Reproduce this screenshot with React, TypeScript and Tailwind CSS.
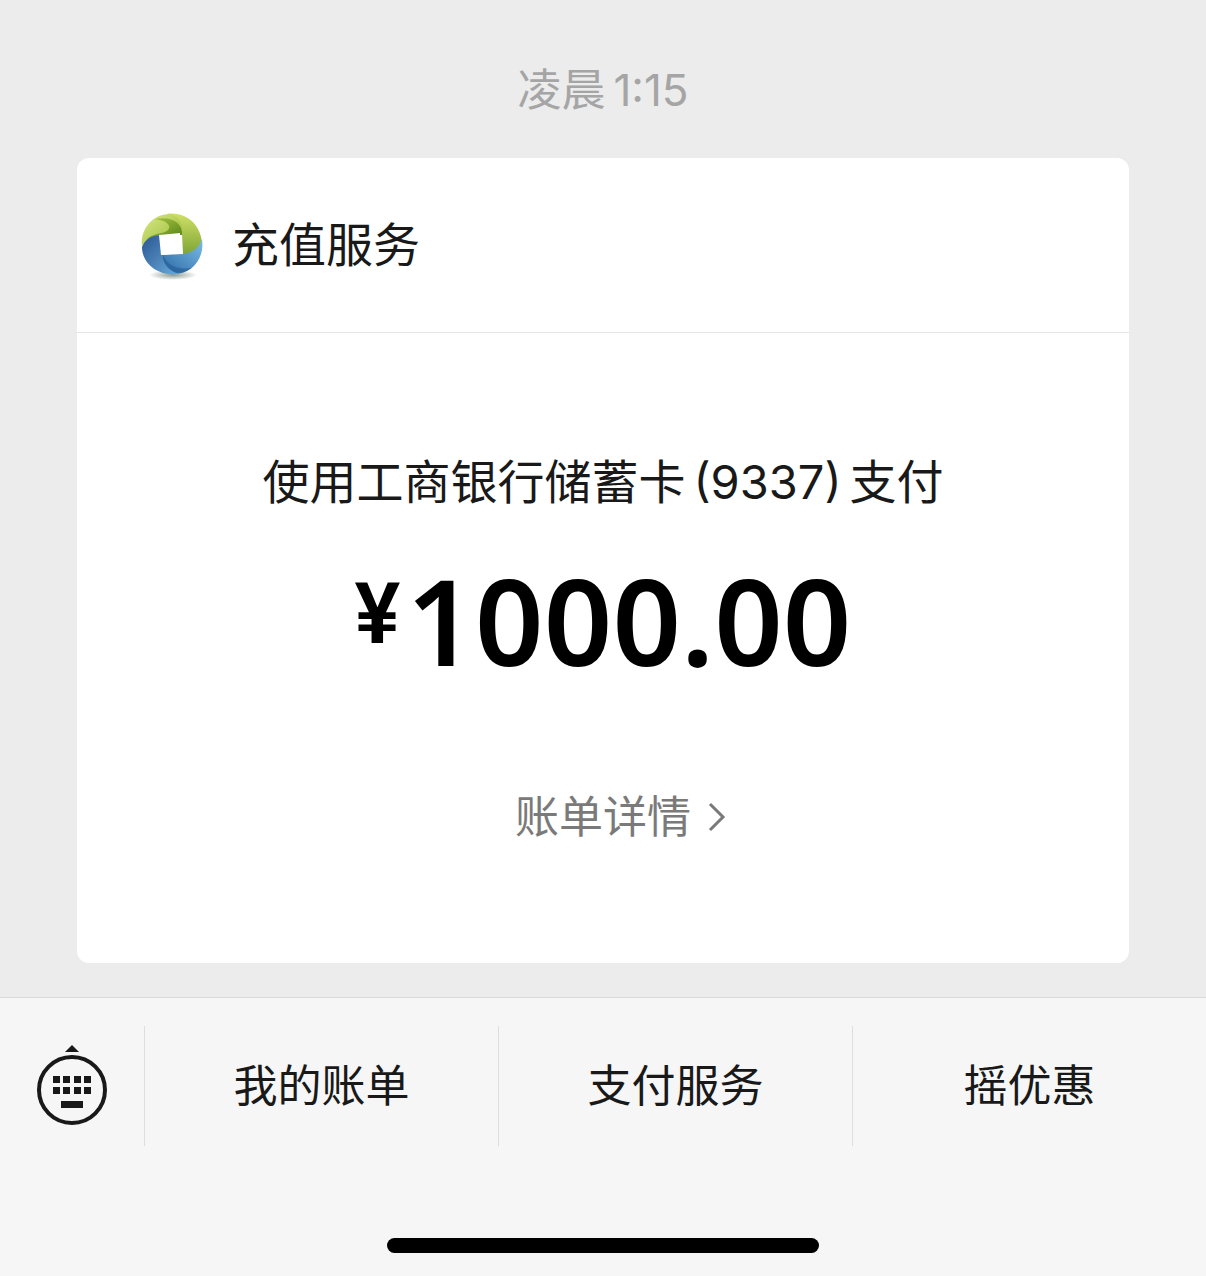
import React from 'react';

const menuItems = ['我的账单', '支付服务', '摇优惠'];

const ServiceLogo: React.FC = () => (
  <svg viewBox="0 0 70 74" className="w-[70px] h-[74px]" aria-hidden="true">
    <defs>
      <linearGradient id="green-light" x1="0" y1="0" x2="1" y2="1">
        <stop offset="0" stopColor="#dbe98a" />
        <stop offset="1" stopColor="#94b92f" />
      </linearGradient>
      <linearGradient id="green-dark" x1="0" y1="0" x2="1" y2="1">
        <stop offset="0" stopColor="#b4cc48" />
        <stop offset="1" stopColor="#4d7f14" />
      </linearGradient>
      <linearGradient id="green-side" x1="0" y1="0" x2="0" y2="1">
        <stop offset="0" stopColor="#cfe066" />
        <stop offset="1" stopColor="#7fa535" />
      </linearGradient>
      <linearGradient id="blue-left" x1="0" y1="0" x2="1" y2="1">
        <stop offset="0" stopColor="#2a5592" />
        <stop offset="1" stopColor="#69abda" />
      </linearGradient>
      <linearGradient id="blue-bottom" x1="1" y1="0" x2="0" y2="1">
        <stop offset="0" stopColor="#7cbce6" />
        <stop offset="1" stopColor="#2a68a4" />
      </linearGradient>
      <radialGradient id="logo-shadow">
        <stop offset="0" stopColor="#5c7060" stopOpacity="0.7" />
        <stop offset="1" stopColor="#5c7060" stopOpacity="0" />
      </radialGradient>
    </defs>
    <ellipse cx="36" cy="67" rx="24" ry="5" fill="url(#logo-shadow)" />
    {/* right green blade */}
    <path d="M30 6C50 3 64 18 65 35C62 42 55 47 46 46L45 26C45 18 40 10 30 6Z" fill="url(#green-side)" />
    {/* top left green blade */}
    <path d="M5 38C3 20 17 5 34 6C44 10 46 18 45 26L24 27C15 28 9 32 5 38Z" fill="url(#green-light)" />
    <path d="M18 11C36 8 46 16 45 27L24 27C15 28 10 31 8 33C13 27 20 26 24 25C34 24 38 14 18 11Z" fill="url(#green-dark)" />
    {/* bottom right blue blade */}
    <path d="M65 31C68 50 55 66 38 66C29 62 25 55 25 47L46 46C55 45 62 40 65 31Z" fill="url(#blue-bottom)" />
    <path d="M26 47C30 57 40 62 54 60C44 68 30 66 25 52Z" fill="#285f99" opacity="0.7" />
    {/* left blue blade */}
    <path d="M5 39C8 31 15 27 24 27L25 46C26 56 32 63 42 66C22 69 5 56 5 39Z" fill="url(#blue-left)" />
    <path d="M22 27L43 25L44 45L24 47Z" fill="#fff" />
  </svg>
);

const KeyboardIcon: React.FC = () => (
  <svg viewBox="0 0 72 82" className="w-[72px] h-[82px]" fill="#191919" aria-hidden="true">
    <path d="M36 0L43 7H29Z" />
    <circle cx="36" cy="45" r="33" fill="none" stroke="#191919" strokeWidth="4" />
    {[17, 27, 38, 48].map((x) => (
      <React.Fragment key={x}>
        <rect x={x} y="31" width="7" height="7" />
        <rect x={x} y="42" width="7" height="7" />
      </React.Fragment>
    ))}
    <rect x="25" y="56" width="22" height="7" />
  </svg>
);

const App: React.FC = () => {
  return (
    <div className="min-h-screen flex flex-col bg-[#ececec] text-[#191919] font-['Inter','Noto_Sans_CJK_SC',sans-serif]">
      <main className="flex-1 px-[77px]">
        <time className="flex justify-center gap-2 pt-[60px] h-[158px] text-[44px] leading-[60px] text-[#a5a5a5]">
          <span>凌晨</span>
          <span>1:15</span>
        </time>

        <section className="bg-white rounded-xl">
          <header className="flex items-center gap-[25px] h-[175px] px-[60px] border-b border-[#e6e6e6]">
            <ServiceLogo />
            <h1 className="text-[47px] leading-[64px]">充值服务</h1>
          </header>

          <div className="flex flex-col items-center pt-[117px] pb-[114px]">
            <p className="flex gap-2 text-[47px] leading-[64px]">
              <span>使用工商银行储蓄卡</span>
              <span>(9337)</span>
              <span>支付</span>
            </p>
            <p className="flex items-start gap-1.5 mt-[40px] font-semibold text-black">
              <span className="font-['Roboto',sans-serif] text-[86px] leading-[120px]">¥</span>
              <span className="font-['Noto_Sans',sans-serif] text-[120px] leading-[132px]">1000.00</span>
            </p>
            <a href="#bill" className="flex items-center gap-4 mt-[99px] pl-9 text-[44px] leading-[64px] text-[#7a7a7a]">
              账单详情
              <svg viewBox="0 0 20 30" className="w-5 h-[30px]" fill="none" stroke="currentColor" strokeWidth="3" aria-hidden="true">
                <path d="M3 2L16 15L3 28" />
              </svg>
            </a>
          </div>
        </section>
      </main>

      <footer className="mt-[34px] h-[279px] flex flex-col justify-between bg-[#f6f6f6] border-t border-[#d9d9d9]">
        <nav className="flex pt-[28px]">
          <button type="button" aria-label="键盘" className="w-[144px] h-[120px] flex items-center justify-center">
            <KeyboardIcon />
          </button>
          {menuItems.map((item) => (
            <button key={item} type="button" className="flex-1 h-[120px] border-l border-[#dedede] text-[44px] leading-[64px]">
              {item}
            </button>
          ))}
        </nav>
        <div className="w-[432px] h-[15px] mb-[23px] mx-auto rounded-full bg-black" />
      </footer>
    </div>
  );
};

export default App;
